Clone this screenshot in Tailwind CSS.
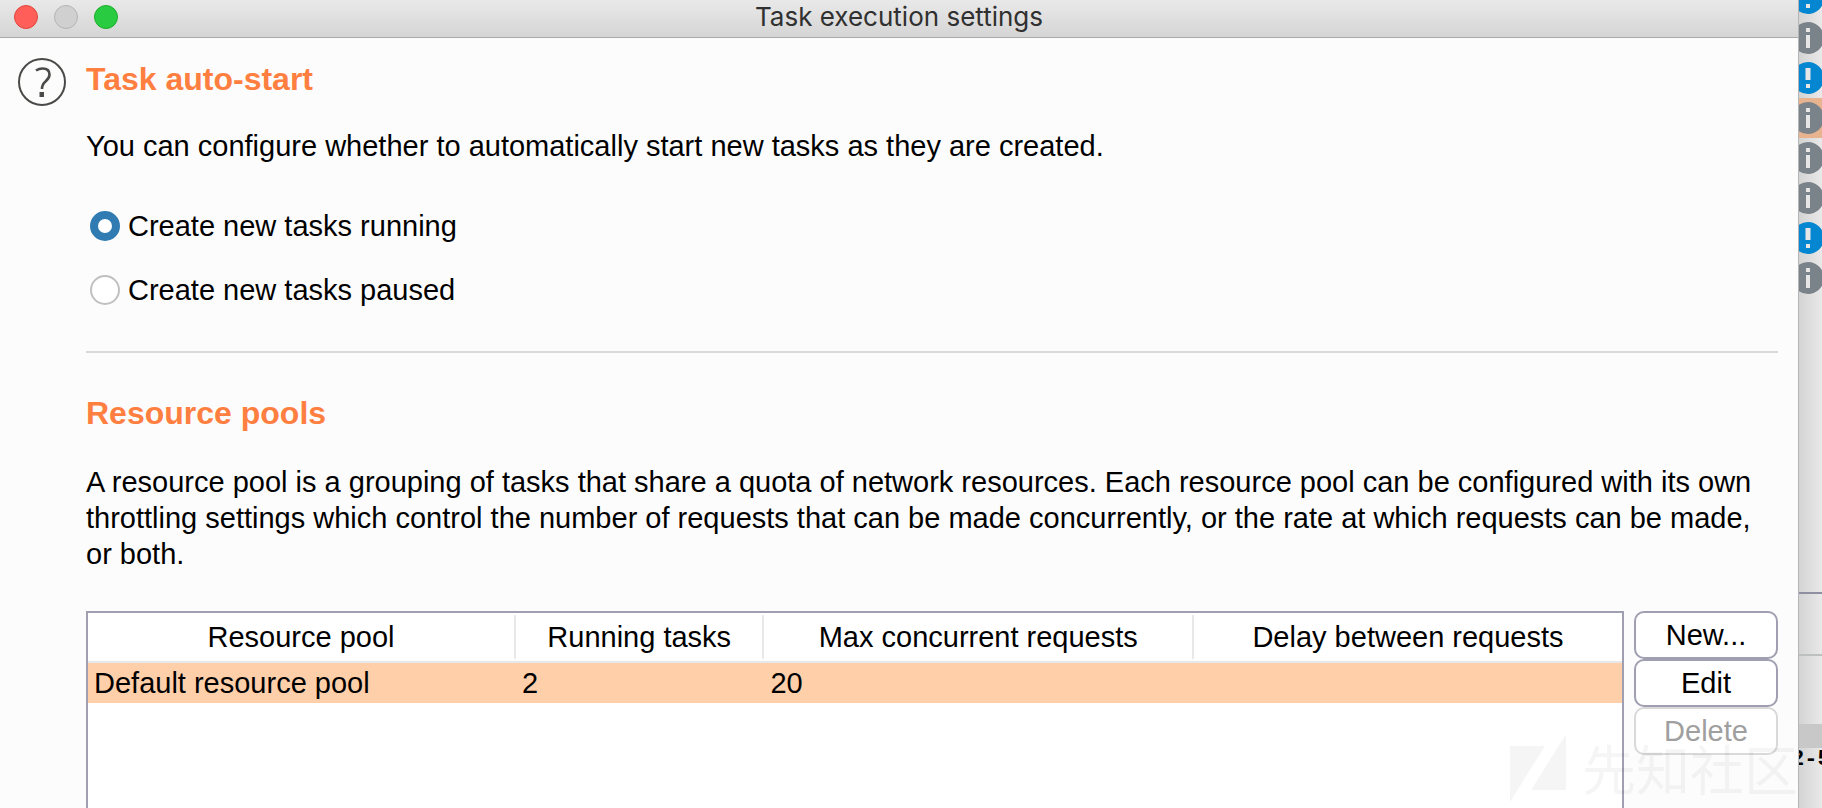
<!DOCTYPE html>
<html lang="en">
<head>
<meta charset="utf-8">
<title>Task execution settings</title>
<script src="https://cdn.jsdelivr.net/npm/@tailwindcss/browser@4"></script>
</head>
<body class="relative flex h-screen overflow-hidden bg-[#fcfcfc] font-['Liberation_Sans',Arial,sans-serif] text-[29px] leading-9 text-black">

<svg class="hidden" aria-hidden="true">
  <symbol id="info" viewBox="0 0 32 32"><circle cx="16" cy="16" r="16" fill="#7a828a"/><path d="M14 6h4v4h-4zM14 13h4v13h-4z" fill="#e6e6e6"/></symbol>
  <symbol id="alert" viewBox="0 0 32 32"><circle cx="16" cy="16" r="16" fill="#0586d0"/><path d="M13.500 6h5v12h-5zM14 22h4v4h-4z" fill="#e6e6e6"/></symbol>
</svg>

<div class="flex min-w-0 flex-1 flex-col">
  <header class="grid h-[38px] shrink-0 grid-cols-[1fr_auto_1fr] items-center border-b border-[#a9a9a9] bg-linear-to-b from-[#e9e9e9] to-[#d5d5d5] px-3.5 pb-1">
    <div class="flex gap-4">
      <button aria-label="Close" class="size-6 rounded-full border border-[#e2463f] bg-[#ff5f58]"></button>
      <button aria-label="Minimize" disabled class="size-6 rounded-full border border-[#b4b4b4] bg-[#d0d0d0]"></button>
      <button aria-label="Zoom" class="size-6 rounded-full border border-[#1dad2c] bg-[#29cc40]"></button>
    </div>
    <h1 class="font-[Inter] text-[26px] leading-8 text-[#303030]">Task execution settings</h1>
  </header>

  <main class="flex min-h-0 flex-1 pr-5 pl-[18px]">
    <button aria-label="Help" class="mt-5 mr-5 size-12 shrink-0">
      <svg viewBox="0 0 48 48" class="size-12" fill="none" stroke="#4a4a48">
        <circle cx="24" cy="24" r="23" stroke-width="2"/>
        <path d="M18 12.500c2-1.300 4-2 6.500-2 4.500 0 7 2.400 7 6 0 3-1.500 4.800-4 7-2.400 2-3.500 3.600-3.500 7.500" stroke-width="2.600"/>
        <path d="M21.500 34h4.500v5h-4.500z" fill="#4a4a48" stroke="none"/>
      </svg>
    </button>

    <div class="flex min-w-0 flex-1 flex-col">
      <section class="pt-[21px]">
        <h2 class="text-[32px] leading-10 font-bold text-[#ff7f41]">Task auto-start</h2>
        <p class="mt-[29px]">You can configure whether to automatically start new tasks as they are created.</p>
        <div class="mt-11 flex flex-col items-start gap-7 pl-1">
          <label class="flex items-center gap-2"><input type="radio" name="start" checked class="size-[30px] appearance-none rounded-full border-2 border-[#c0c0c0] bg-white checked:border-8 checked:border-[#307cb2]">Create new tasks running</label>
          <label class="flex items-center gap-2"><input type="radio" name="start" class="size-[30px] appearance-none rounded-full border-2 border-[#c0c0c0] bg-white checked:border-8 checked:border-[#307cb2]">Create new tasks paused</label>
        </div>
      </section>
      <hr class="mt-[43px] border-t-2 border-[#d9d9d9]">
      <section class="flex min-h-0 flex-1 flex-col pt-10">
        <h2 class="text-[32px] leading-10 font-bold text-[#ff7f41]">Resource pools</h2>
        <p class="mt-[31px] pr-2">A resource pool is a grouping of tasks that share a quota of network resources. Each resource pool can be configured with its own throttling settings which control the number of requests that can be made concurrently, or the rate at which requests can be made, or both.</p>
        <div class="mt-[39px] flex min-h-0 flex-1 gap-2.5">
          <div class="min-w-0 flex-1 border-2 border-b-0 border-[#9f9fb1] bg-white">
            <table class="w-full table-fixed border-collapse">
              <colgroup><col class="w-[27.9%]"><col class="w-[16.2%]"><col class="w-[28%]"><col class="w-[27.9%]"></colgroup>
              <thead>
                <tr class="border-b-2 border-[#e8e8e8] [&>th]:p-0 [&>th]:py-0.5 [&>th]:font-normal [&>th>span]:block [&>th>span]:border-r-2 [&>th>span]:border-[#e8e8e8] [&>th>span]:py-1">
                  <th scope="col"><span>Resource pool</span></th>
                  <th scope="col"><span>Running tasks</span></th>
                  <th scope="col"><span>Max concurrent requests</span></th>
                  <th scope="col"><span class="border-r-0!">Delay between requests</span></th>
                </tr>
              </thead>
              <tbody>
                <tr class="bg-[#ffcfaa] [&>td]:px-1.5 [&>td]:py-0.5">
                  <td>Default resource pool</td><td>2</td><td>20</td><td></td>
                </tr>
              </tbody>
            </table>
          </div>
          <div class="flex w-36 shrink-0 flex-col">
            <button class="h-12 rounded-[10px] border-2 border-[#9f9fb1] bg-white">New...</button>
            <button class="h-12 rounded-[10px] border-2 border-[#9f9fb1] bg-white">Edit</button>
            <button disabled class="h-12 rounded-[10px] border-2 border-[#d9d9d9] bg-white text-[#9f9f9f]">Delete</button>
          </div>
        </div>
      </section>
    </div>
  </main>
</div>

<!-- Visible edge of the window behind -->
<aside class="flex w-6 shrink-0 flex-col overflow-hidden border-l border-[#b5b5b5] bg-linear-to-r from-[#d4d4d4] to-[#e9e9e9]">
  <ul class="-mt-[22px] h-[616px] shrink-0 border-b-2 border-[#8f8fa3] [&>li]:flex [&>li]:h-10 [&>li]:items-center [&_svg]:-ml-[7px] [&_svg]:size-8 [&_svg]:shrink-0">
    <li><svg><use href="#alert"/></svg></li>
    <li><svg><use href="#info"/></svg></li>
    <li><svg><use href="#alert"/></svg></li>
    <li class="bg-[#e8b48f]"><svg><use href="#info"/></svg></li>
    <li><svg><use href="#info"/></svg></li>
    <li><svg><use href="#info"/></svg></li>
    <li><svg><use href="#alert"/></svg></li>
    <li><svg><use href="#info"/></svg></li>
  </ul>
  <div class="h-[62px] shrink-0 border-b-2 border-[#bcc0c0]"></div>
  <div class="h-[68px] shrink-0"></div>
  <div class="h-6 shrink-0 bg-[#c8c8c8]"></div>
  <p class="-ml-2 font-['Liberation_Mono',monospace] text-[22px] leading-6 font-bold whitespace-nowrap">2-5</p>
</aside>

<!-- Watermark -->
<div class="pointer-events-none absolute right-6 bottom-1.5 flex items-center gap-4 text-black/4">
  <svg viewBox="0 0 56 68" class="h-[68px] w-14" fill="currentColor"><path d="M0 12h35L0 68zM56 0v56H21z"/></svg>
  <span class="font-['Noto_Sans_CJK_SC',sans-serif] text-[54px] leading-[68px]" lang="zh">先知社区</span>
</div>
</body>
</html>
